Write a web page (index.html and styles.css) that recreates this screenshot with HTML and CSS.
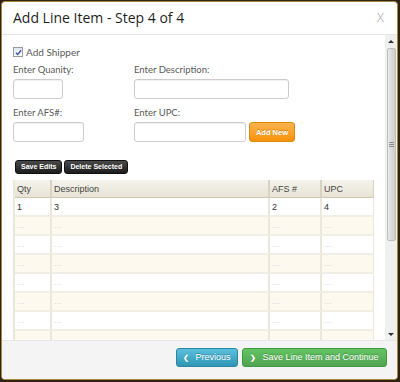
FILE: index.html
```html
<!DOCTYPE html>
<html>
<head>
<meta charset="utf-8">
<link rel="stylesheet" href="styles.css">
</head>
<body>
<div class="modal">
  <div class="modal-header">
    <h3 class="title">Add Line Item - Step 4 of 4</h3>
    <span class="close">X</span>
  </div>
  <div class="modal-body">
    <div class="content">
      <label class="check-row"><span class="checkbox"><svg width="7" height="7" viewBox="0 0 8 8"><path d="M1 4.2 L3.1 6.3 L7 1.4" fill="none" stroke="#3a55a0" stroke-width="1.5"/></svg></span>Add Shipper</label>
      <div class="form-grid">
        <div class="field">
          <div class="lbl">Enter Quanity:</div>
          <input class="inp w-qty" type="text">
        </div>
        <div class="field">
          <div class="lbl">Enter Description:</div>
          <input class="inp w-desc" type="text">
        </div>
        <div class="field">
          <div class="lbl">Enter AFS#:</div>
          <input class="inp w-afs" type="text">
        </div>
        <div class="field">
          <div class="lbl">Enter UPC:</div>
          <div class="inline">
            <input class="inp w-upc" type="text">
            <button class="btn-orange">Add New</button>
          </div>
        </div>
      </div>
      <div class="actions">
        <button class="btn-dark">Save Edits</button>
        <button class="btn-dark">Delete Selected</button>
      </div>
      <table class="grid">
        <thead>
          <tr><th class="c1">Qty</th><th class="c2">Description</th><th class="c3">AFS #</th><th class="c4">UPC</th></tr>
        </thead>
        <tbody>
          <tr><td>1</td><td>3</td><td>2</td><td>4</td></tr>
          <tr class="alt"><td class="dots">...</td><td class="dots">...</td><td class="dots">...</td><td class="dots">...</td></tr>
          <tr><td class="dots">...</td><td class="dots">...</td><td class="dots">...</td><td class="dots">...</td></tr>
          <tr class="alt"><td class="dots">...</td><td class="dots">...</td><td class="dots">...</td><td class="dots">...</td></tr>
          <tr><td class="dots">...</td><td class="dots">...</td><td class="dots">...</td><td class="dots">...</td></tr>
          <tr class="alt"><td class="dots">...</td><td class="dots">...</td><td class="dots">...</td><td class="dots">...</td></tr>
          <tr><td class="dots">...</td><td class="dots">...</td><td class="dots">...</td><td class="dots">...</td></tr>
          <tr class="alt"><td class="dots">...</td><td class="dots">...</td><td class="dots">...</td><td class="dots">...</td></tr>
        </tbody>
      </table>
    </div>
    <div class="scrollbar">
      <div class="arrow"><span class="tri-up"></span></div>
      <div class="thumb"><span class="grip"></span></div>
      <div class="track"></div>
      <div class="arrow"><span class="tri-down"></span></div>
    </div>
  </div>
  <div class="modal-footer">
    <button class="btn btn-info"><span class="chev">&#x276E;</span>Previous</button>
    <button class="btn btn-success"><span class="chev">&#x276F;</span>Save Line Item and Continue</button>
  </div>
</div>
</body>
</html>
```

FILE: styles.css
```css
html, body {
  margin: 0;
  padding: 0;
}
body {
  width: 400px;
  height: 382px;
  overflow: hidden;
  background: #2e230e;
}
.modal {
  margin: 1px 2px 2px 1px;
  height: 377px;
  border: 1px solid #a8873e;
  border-radius: 4px;
  background: #fff;
  display: flex;
  flex-direction: column;
  overflow: hidden;
}
.modal-header {
  height: 32px;
  border-bottom: 1px solid #e5e5e5;
  display: flex;
  align-items: center;
  justify-content: space-between;
  padding: 0 13px 0 11px;
}
.title {
  margin: 0;
  font-family: "Open Sans", sans-serif;
  font-weight: 400;
  font-size: 14px;
  color: #1f1f1f;
  line-height: 20px;
}
.close {
  font-family: "Open Sans", sans-serif;
  font-size: 12px;
  color: #bdbdbd;
  line-height: 14px;
}
.modal-body {
  flex: 1;
  display: flex;
  overflow: hidden;
  min-height: 0;
}
.content {
  flex: 1;
  overflow: hidden;
  padding: 9px 0 0 11px;
}
.check-row {
  display: flex;
  align-items: center;
  height: 16px;
  font-family: Lato, "Open Sans", sans-serif;
  font-size: 10px;
  color: #5a5a5a;
}
.checkbox {
  width: 8px;
  height: 8px;
  border: 1px solid #9a9aa8;
  background: linear-gradient(#e3e6ef, #fff);
  margin-right: 3px;
  display: flex;
  align-items: center;
  justify-content: center;
}
.form-grid {
  display: grid;
  grid-template-columns: 121px auto;
}
.field {
  display: flex;
  flex-direction: column;
  align-items: flex-start;
}
.lbl {
  font-family: Lato, "Open Sans", sans-serif;
  font-size: 9.5px;
  color: #5a5a5a;
  line-height: 15px;
  margin-top: 2px;
}
.field:nth-child(3) .lbl,
.field:nth-child(4) .lbl {
  margin-top: 6px;
}
.inp {
  margin: 2px 0 0 0;
  height: 20px;
  box-sizing: border-box;
  border: 1px solid #cccccc;
  border-radius: 3px;
  box-shadow: inset 0 1px 1px rgba(0,0,0,0.06);
  padding: 0 4px;
  background: #fff;
}
.w-qty { width: 50px; }
.w-desc { width: 155px; }
.w-afs { width: 71px; }
.w-upc { width: 112px; }
.inline {
  display: flex;
  align-items: flex-start;
  gap: 3px;
}
.btn-orange {
  margin-top: 2px;
  height: 20px;
  width: 46px;
  padding: 0;
  border: 1px solid #e0890c;
  border-radius: 3px;
  background: linear-gradient(#fbb450, #f7920a);
  color: #fff;
  font-family: "Liberation Sans", Arial, sans-serif;
  font-weight: bold;
  font-size: 7.5px;
  white-space: nowrap;
  text-shadow: 0 -1px 0 rgba(0,0,0,0.2);
}
.actions {
  display: flex;
  gap: 2px;
  margin: 18px 0 0 2px;
}
.btn-dark {
  height: 14px;
  padding: 0 5px;
  border: 1px solid #111;
  border-radius: 3px;
  background: linear-gradient(#4a4a4a, #1c1c1c);
  color: #fff;
  font-family: "Liberation Sans", Arial, sans-serif;
  font-weight: bold;
  font-size: 7px;
  line-height: 12px;
  white-space: nowrap;
}
.grid {
  margin-top: 6px;
  width: 361px;
  border-collapse: separate;
  border-spacing: 0;
  border-left: 2px solid #ebe7db;
  table-layout: fixed;
  font-family: "Liberation Sans", Arial, sans-serif;
  font-size: 9px;
  color: #333;
}
.grid th {
  height: 17px;
  padding: 0 0 0 2px;
  text-align: left;
  font-weight: normal;
  color: #444;
  background: linear-gradient(#f5f3ec, #e7e3d5);
  border-bottom: 1px solid #cdc6b2;
  border-right: 2px solid #d8d2c0;
}
.grid th.c4 { border-right: 1px solid #d8d2c0; }
.c1 { width: 33px; }
.c2 { width: 214px; }
.c3 { width: 48px; }
.grid td {
  height: 17px;
  padding: 0 0 0 2px;
  border-right: 2px solid #ebe7db;
  border-bottom: 2px solid #f1eee5;
  background: #fff;
  white-space: nowrap;
}
.grid td:last-child { border-right: 1px solid #ebe7db; }
.grid tr.alt td { background: #fdf9ee; }
.grid td.dots {
  color: #c6c6d6;
  font-size: 8px;
  letter-spacing: 0.5px;
}
.scrollbar {
  width: 12px;
  background: #f0f0f0;
  display: flex;
  flex-direction: column;
  align-items: center;
}
.arrow {
  height: 12px;
  width: 12px;
  display: flex;
  align-items: center;
  justify-content: center;
}
.tri-up {
  width: 0;
  height: 0;
  border-left: 3px solid transparent;
  border-right: 3px solid transparent;
  border-bottom: 3px solid #333;
}
.tri-down {
  width: 0;
  height: 0;
  border-left: 3px solid transparent;
  border-right: 3px solid transparent;
  border-top: 3px solid #333;
}
.thumb {
  margin-top: 1px;
  width: 9px;
  height: 193px;
  box-sizing: border-box;
  border: 1px solid #bdbdbd;
  border-radius: 2px;
  background: linear-gradient(to right, #e9e9e9, #d6d6d6 60%, #cfcfcf);
  display: flex;
  align-items: center;
  justify-content: center;
}
.grip {
  width: 5px;
  height: 5px;
  background: repeating-linear-gradient(#8a8a8a 0 1px, transparent 1px 2px);
}
.track { flex: 1; }
.modal-footer {
  height: 39px;
  box-sizing: border-box;
  background: #f4f4f4;
  border-top: 1px solid #e8e8e8;
  display: flex;
  justify-content: flex-end;
  align-items: flex-start;
  padding: 7px 10px 0 0;
  gap: 4px;
}
.btn {
  height: 19px;
  padding: 0;
  border-radius: 3px;
  color: #fff;
  font-family: "Liberation Sans", Arial, sans-serif;
  font-size: 9px;
  line-height: 17px;
  white-space: nowrap;
  text-shadow: 0 -1px 0 rgba(0,0,0,0.25);
  display: flex;
  align-items: center;
  justify-content: center;
}
.btn-info {
  width: 62px;
  border: 1px solid #2a87a3;
  background: linear-gradient(#5bc0de, #2f96b4);
}
.btn-success {
  width: 145px;
  border: 1px solid #3f9a3f;
  background: linear-gradient(#62c462, #51a351);
}
.chev {
  font-size: 7px;
  font-weight: bold;
  margin-right: 6px;
}
```
